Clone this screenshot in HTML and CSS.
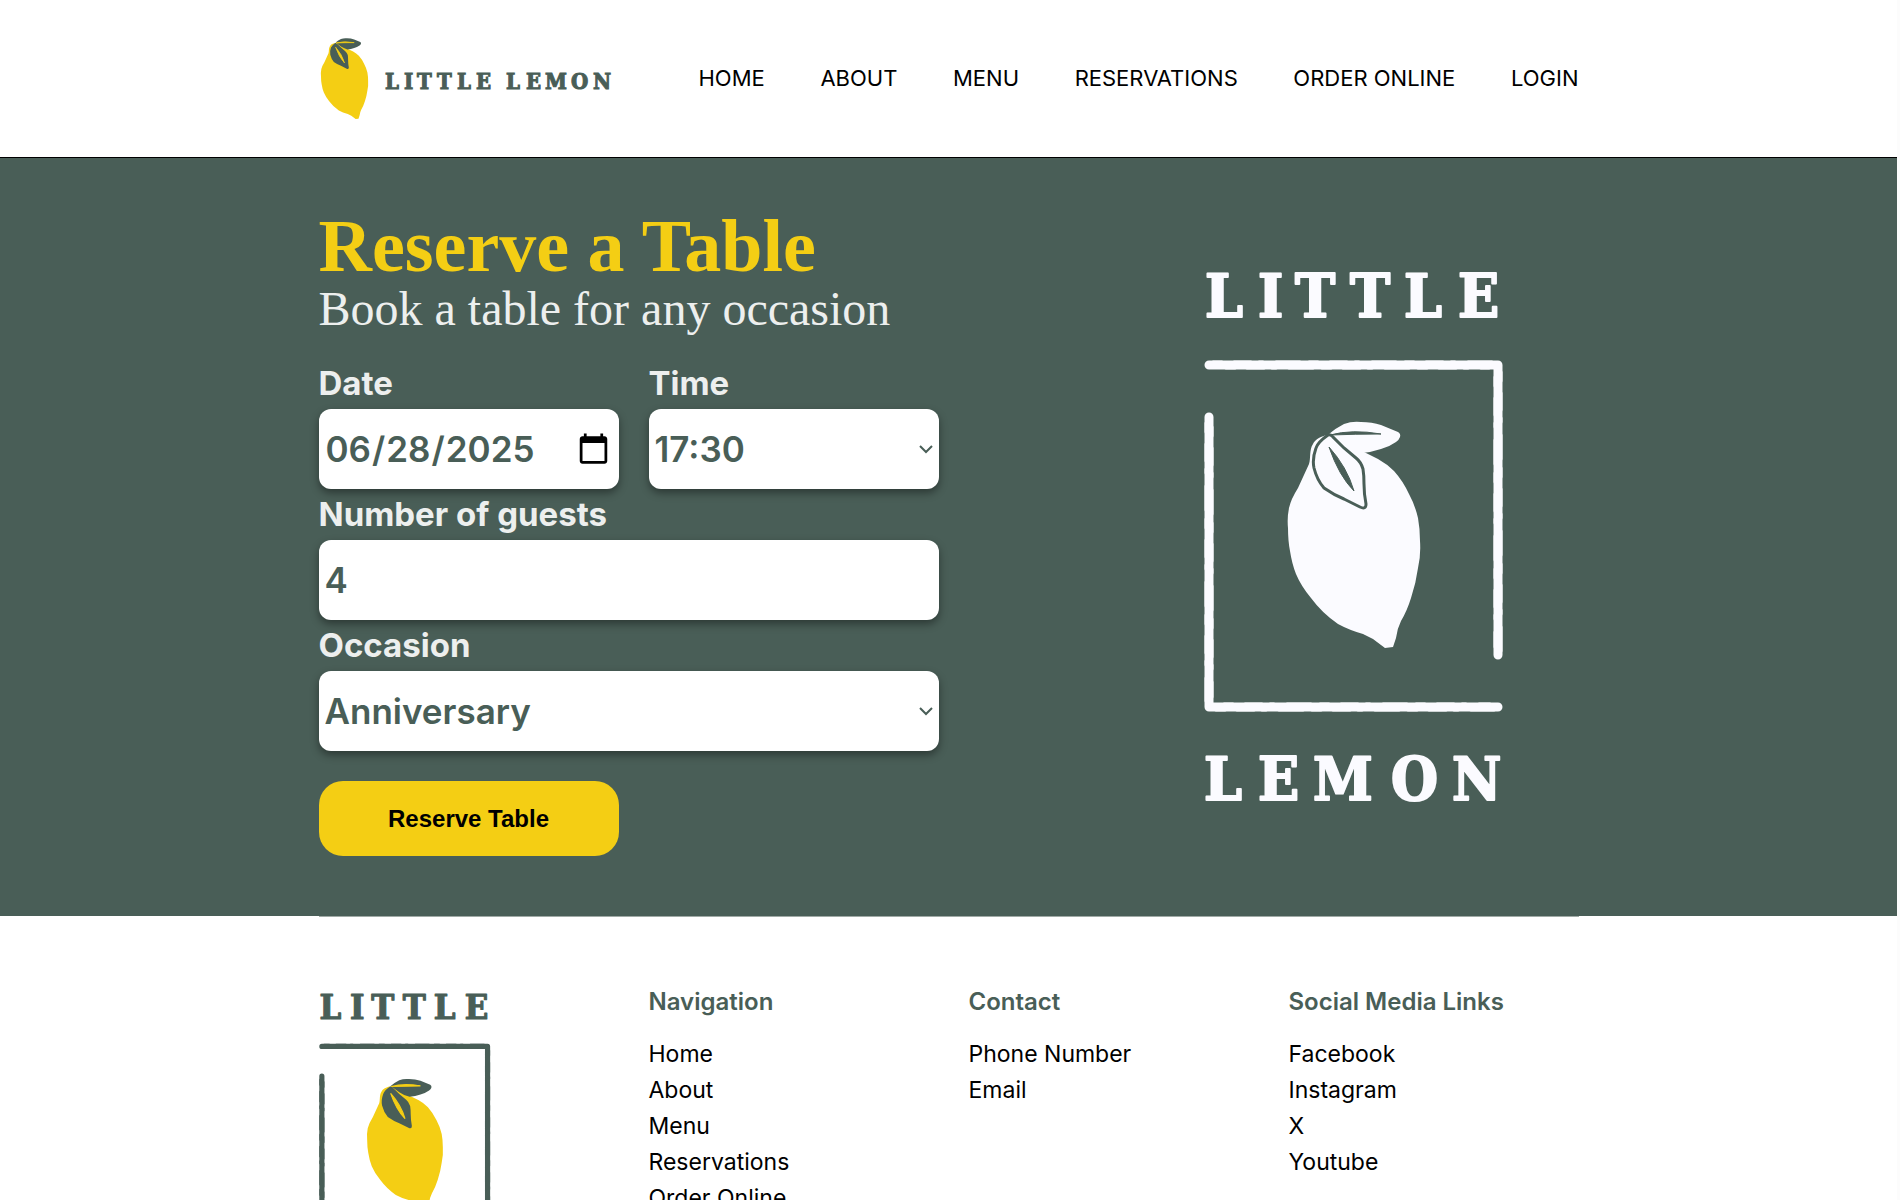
FILE: index.html
```html
<!DOCTYPE html>
<html lang="en-US">
<head>
<meta charset="utf-8">
<meta name="viewport" content="width=device-width, initial-scale=1">
<title>Little Lemon - Reserve a Table</title>
<link rel="stylesheet" href="styles.css">
</head>
<body>
<svg class="sprite" width="0" height="0" aria-hidden="true">
  <defs>
    <g id="lemon-fruit">
      <path d="M123 168C118 169 111 172 109 177C105 183 107 191 105 197L94 221Q87 232 85 241Q83 251 84 261Q84 274 86 284Q88 297 92 307Q97 319 107 331Q118 346 134 357Q145 363 159 367L169 372L181 381L189 380L192 371Q193 362 197 354Q203 344 207 331Q212 316 214 301Q217 288 216 274Q216 262 214 251Q211 238 205 227Q199 214 190 204Q183 197 174 192L158 184L135 168Z"/>
    </g>
    <path id="lemon-back-leaf" d="M125 167Q132 161 140 157Q148 154 157 155Q168 155 177 158L194 165Q197 167 196 170Q195 173 192 175Q185 180 177 182Q168 185 158 186Q147 183 140 178Z"/>
    <path id="lemon-front-leaf" d="M124 168Q114 175 112 181Q108 192 110 201Q113 213 120 221Q130 228 140 232L156 240Q162 243 162 237Q160 227 160 217Q160 208 159 202Q157 195 152 191L140 181L129 170Q127 167 124 168Z"/>
    <path id="lemon-back-vein" d="M126 168Q148 162 177 167Q151 167 126 168Z"/>
    <path id="lemon-front-vein" d="M125 180Q143 200 150 224Q135 209 125 180Z"/>
    <g id="logo-frame" fill="none" stroke-linejoin="round" stroke-linecap="round">
      <path stroke-width="9" d="M5 98H294V388M5 150V440H294"/>
      <path stroke-width="3" stroke-dasharray="9 12 17 8 4 13 24 9" d="M9 95H288M297 105V384M2 156V434M12 443H290M22 101H285M291 110V380M8 160V430M20 437H286"/>
    </g>
    <g id="logo-words">
      <text class="wordmark" y="50" x="1 54 91 146 200 254">LITTLE</text>
      <text class="wordmark" y="533" x="0 54 109 187 248">LEMON</text>
    </g>
  </defs>
</svg>

<header class="site-header">
  <div class="container header-row">
    <a class="brand" href="#" aria-label="Little Lemon">
      <svg width="294" height="84" viewBox="0 0 294 84">
        <g transform="translate(-28 -53) scale(.357)">
          <use href="#lemon-fruit" class="yellow"/>
          <use href="#lemon-back-leaf" class="green"/>
          <use href="#lemon-front-leaf" class="green"/>
          <use href="#lemon-back-vein" class="yellow vein"/>
          <use href="#lemon-front-vein" class="yellow vein"/>
        </g>
        <text class="wordmark-small" y="53" x="66 85 98 118 138 157 187 207 226 252 274">LITTLELEMON</text>
      </svg>
    </a>
    <nav class="main-nav">
      <a href="#">HOME</a>
      <a href="#">ABOUT</a>
      <a href="#">MENU</a>
      <a href="#">RESERVATIONS</a>
      <a href="#">ORDER ONLINE</a>
      <a href="#">LOGIN</a>
    </nav>
  </div>
</header>

<main class="hero">
  <div class="container hero-row">
    <section class="booking">
      <h1>Reserve a Table</h1>
      <h2>Book a table for any occasion</h2>
      <form class="booking-form">
        <div class="field">
          <label for="date">Date</label>
          <input type="date" id="date" value="2025-06-28">
        </div>
        <div class="field">
          <label for="time">Time</label>
          <select id="time"><option>17:30</option></select>
        </div>
        <div class="field wide">
          <label for="guests">Number of guests</label>
          <input type="number" id="guests" value="4">
        </div>
        <div class="field wide">
          <label for="occasion">Occasion</label>
          <select id="occasion"><option>Anniversary</option></select>
        </div>
        <button type="submit">Reserve Table</button>
      </form>
    </section>
    <div class="hero-logo">
      <svg width="300" height="540" viewBox="0 0 300 540" role="img" aria-label="Little Lemon">
        <g class="white">
          <use href="#logo-words" class="slab" stroke="#fbfbff"/>
          <use href="#logo-frame" stroke="#fbfbff"/>
          <use href="#lemon-fruit"/>
          <use href="#lemon-back-leaf"/>
        </g>
        <use href="#lemon-front-leaf" class="white leaf-outline"/>
        <use href="#lemon-back-vein" class="green vein-dark"/>
        <use href="#lemon-front-vein" class="green vein-dark"/>
      </svg>
    </div>
  </div>
</main>

<footer class="container site-footer">
  <div class="footer-logo">
    <svg width="172" height="310" viewBox="0 0 300 540" role="img" aria-label="Little Lemon">
      <g class="green">
        <use href="#logo-words" class="slab" stroke="#495e57"/>
        <use href="#logo-frame" stroke="#495e57"/>
      </g>
      <use href="#lemon-fruit" class="yellow"/>
      <use href="#lemon-back-leaf" class="green"/>
      <use href="#lemon-front-leaf" class="green"/>
      <use href="#lemon-back-vein" class="yellow vein"/>
      <use href="#lemon-front-vein" class="yellow vein"/>
    </svg>
  </div>
  <nav class="footer-col">
    <h3>Navigation</h3>
    <a href="#">Home</a>
    <a href="#">About</a>
    <a href="#">Menu</a>
    <a href="#">Reservations</a>
    <a href="#">Order Online</a>
    <a href="#">Login</a>
  </nav>
  <section class="footer-col">
    <h3>Contact</h3>
    <a href="#">Phone Number</a>
    <a href="#">Email</a>
  </section>
  <section class="footer-col">
    <h3>Social Media Links</h3>
    <a href="#">Facebook</a>
    <a href="#">Instagram</a>
    <a href="#">X</a>
    <a href="#">Youtube</a>
  </section>
</footer>
</body>
</html>
```
FILE: styles.css
```css
* { box-sizing: border-box; }

html { background: #fcfcfc; }

body {
  margin: 0 3px 0 0;
  background: #fff;
  color: #000;
  font-family: Inter, "Liberation Sans", sans-serif;
  font-size: 22px;
}

a { color: inherit; text-decoration: none; }
svg { display: block; }
h1, h2, h3 { margin: 0; }

.sprite { position: absolute; }

.container {
  width: 100%;
  max-width: 1260px;
  margin: 0 auto;
}

/* Logo artwork */
.green { fill: #495e57; }
.yellow { fill: #f4ce14; }
.white { fill: #fbfbff; }
.vein { stroke: #f4ce14; stroke-width: 2; }
.vein-dark { stroke: #495e57; stroke-width: 1; }
.leaf-outline { stroke: #495e57; stroke-width: 3; }
.slab { stroke-width: 2; stroke-linejoin: round; }

.wordmark, .wordmark-small {
  font-family: "DejaVu Serif Condensed", "DejaVu Serif", serif;
  font-weight: bold;
}
.wordmark { font-size: 60px; }
.wordmark-small {
  font-size: 22px;
  fill: #495e57;
  stroke: #495e57;
  stroke-width: 1;
}

/* Header */
.site-header {
  padding: 36px 0 37px;
  border-bottom: 1px solid #000;
}
.header-row {
  display: flex;
  align-items: center;
  justify-content: space-between;
}
.main-nav {
  flex: 0 1 880px;
  display: flex;
  justify-content: space-between;
  line-height: 28px;
}

/* Booking */
.hero {
  padding: 60px 0;
  background: #495e57;
}
.hero-row {
  display: flex;
  align-items: center;
  justify-content: space-between;
}
.booking { flex: 0 1 620px; }
.booking h1, .booking h2 { font-family: "Liberation Serif", serif; }
.booking h1 {
  color: #f4ce14;
  font-size: 74px;
  line-height: 56px;
}
.booking h2 {
  color: #edefee;
  font-size: 48px;
  font-weight: 400;
  line-height: 70px;
}
.booking-form {
  display: grid;
  grid-template-columns: 300px 1fr;
  column-gap: 30px;
  margin-top: 14px;
}
.field {
  display: flex;
  flex-direction: column;
}
.wide { grid-column: 1 / -1; }
.field label {
  color: #edefee;
  font-size: 33px;
  font-weight: 700;
  line-height: 51px;
}
.field input, .field select {
  width: 100%;
  height: 80px;
  padding: 0 6px;
  border: 0;
  border-radius: 12px;
  background: #fff;
  color: #495e57;
  box-shadow: 0 4px 8px rgba(0, 0, 0, .4);
  font: 600 35px Inter, "Liberation Sans", sans-serif;
}
.field select {
  appearance: none;
  background: #fff url("data:image/svg+xml,%3Csvg xmlns='http://www.w3.org/2000/svg' width='14' height='9' fill='none' stroke='%23495e57' stroke-width='2'%3E%3Cpath d='M1 1l6 6 6-6'/%3E%3C/svg%3E") no-repeat right 6px center;
}
.booking-form button {
  height: 75px;
  margin-top: 30px;
  border: 0;
  border-radius: 24px;
  background: #f4ce14;
  color: #000;
  font: bold 24px "Liberation Sans", sans-serif;
}
.hero-logo {
  flex: 0 1 450px;
  display: flex;
  justify-content: center;
}

/* Footer */
.site-footer {
  display: grid;
  grid-template-columns: 300px repeat(3, 1fr);
  column-gap: 30px;
  padding: 73px 0;
  border-top: 1px solid #a0aaa6;
}
.footer-col {
  display: flex;
  flex-direction: column;
  font-size: 23px;
  line-height: 36px;
}
.footer-col h3 {
  margin-bottom: 22px;
  color: #495e57;
  font-size: 24px;
  font-weight: 600;
  line-height: 24px;
}
```
